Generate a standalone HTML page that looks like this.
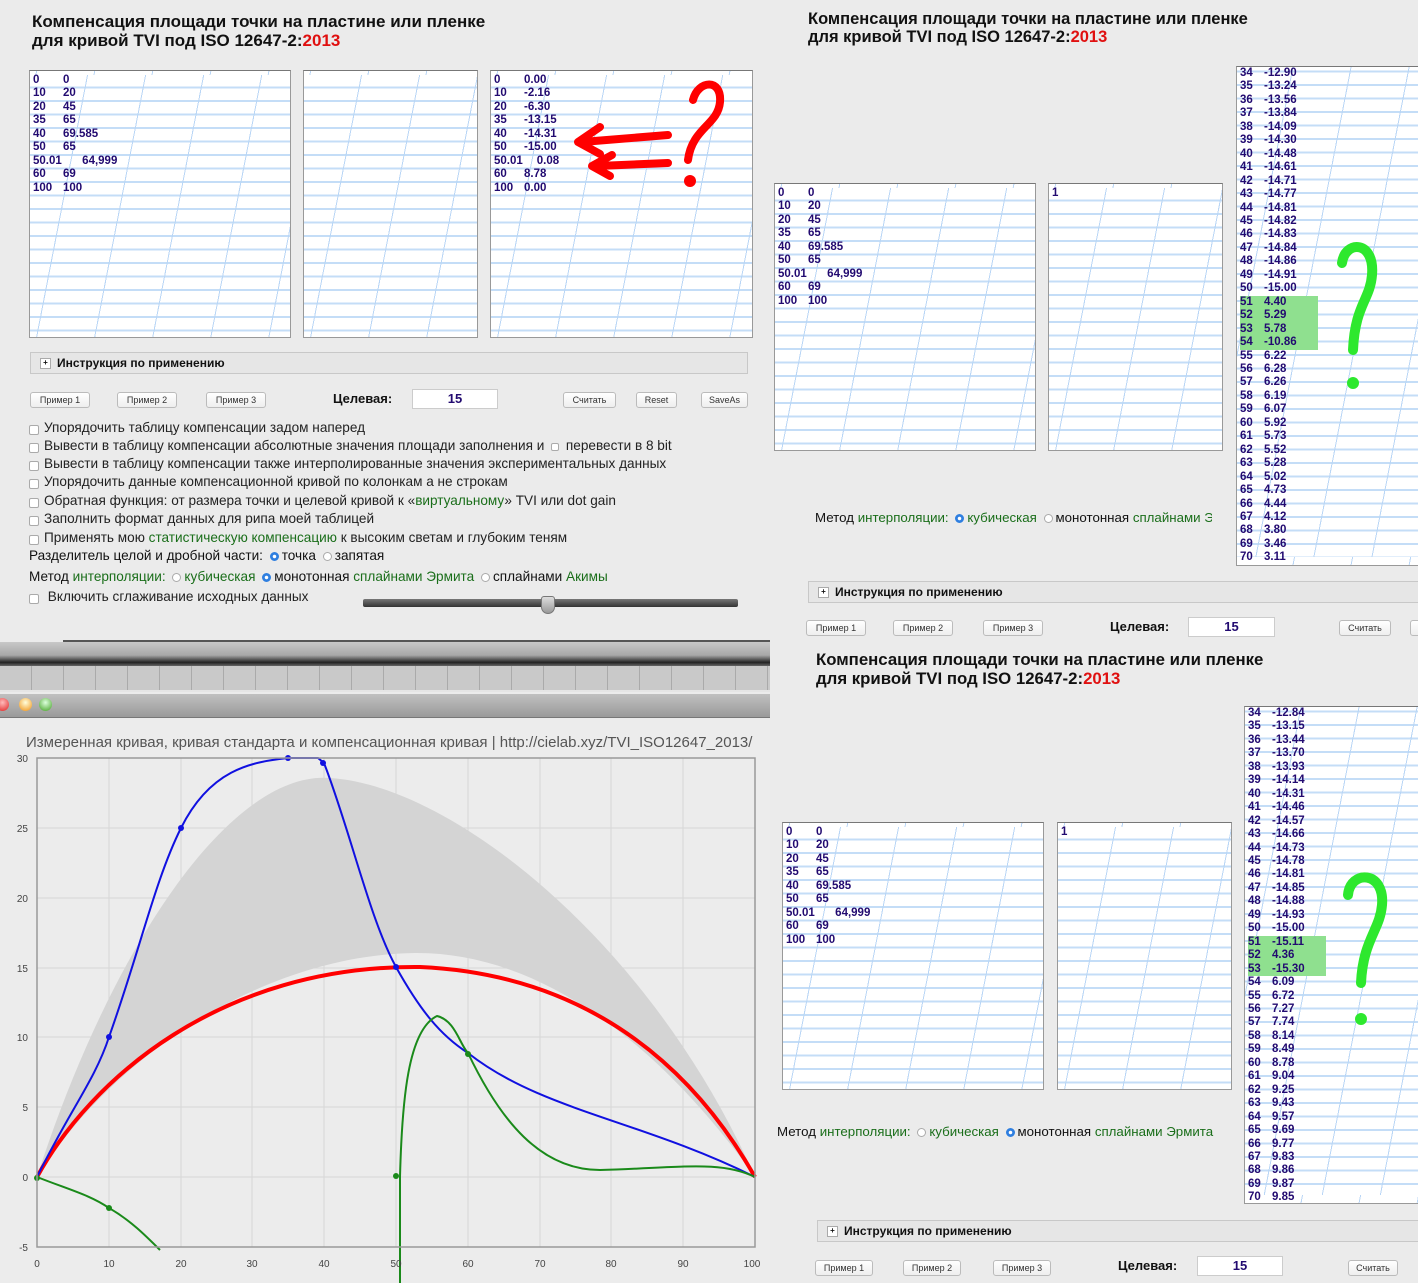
<!DOCTYPE html>
<html><head><meta charset="utf-8"><style>
*{margin:0;padding:0;box-sizing:border-box}
body{width:1418px;height:1283px;background:#ebebeb;position:relative;overflow:hidden;font-family:"Liberation Sans","DejaVu Sans",sans-serif;font-size:12px;color:#111}
.a{position:absolute}
.t{font-weight:bold;font-size:17px;line-height:19px;color:#111;white-space:nowrap}
.t span{color:#e01010}
.ta{position:absolute;background-color:#fff;border:1px solid #999;border-top-color:#777;overflow:hidden;
background-image:repeating-linear-gradient(101deg,transparent 0 56px,#b9d6f6 56px 57px),repeating-linear-gradient(180deg,transparent 0 11.5px,#c4ddf7 11.5px 13.5px);
background-position:0 4px,0 4px;font-weight:bold;font-size:11.5px;line-height:13.45px;color:#220a70;padding:3px 0 0 3px}
.ta i{font-style:normal;display:inline-block;width:30px}
.col i{width:24px}
.hl{background:#8fe08f;width:78px}
.bar{position:absolute;height:22px;border:1px solid #c8c8c8;background:#e6e6e6;font-weight:bold;font-size:12px;padding:3px 0 0 26px}
.bar:before{content:"+";position:absolute;left:9px;top:5px;width:9px;height:9px;border:1px solid #aaa;font-size:8px;line-height:7px;text-align:center;background:#fff}
.btn{position:absolute;height:16px;border:1px solid #bbb;border-radius:3px;background:linear-gradient(#fff,#eee);font-size:9px;text-align:center;line-height:14px;color:#333}
.lbl{position:absolute;font-weight:bold;font-size:13px}
.inp{position:absolute;height:20px;background:#fff;border:1px solid #ccc;text-align:center;font-weight:bold;color:#220a70;font-size:13px;line-height:18px}
.cb{position:absolute;left:29px;font-size:13.6px;line-height:15px;color:#222;white-space:nowrap}
.cb:before{content:"";display:inline-block;width:8px;height:8px;border:1px solid #aaa;border-radius:2px;background:#fff;margin-right:5px;vertical-align:-3px}
.g{color:#1a6e1a}
.r{display:inline-block;width:9px;height:9px;border-radius:50%;border:1px solid #aaa;background:#fff;vertical-align:-1px;margin:0 3px}
.r.on{background:radial-gradient(#fff 0 1.5px,#2f7fe0 2px);border-color:#2f7fe0}
</style></head><body>

<!-- TOP LEFT -->
<div class="a t" style="left:32px;top:12px">Компенсация площади точки на пластине или пленке<br>для кривой TVI под ISO 12647-2:<span>2013</span></div>
<div class="ta" style="left:29px;top:70px;width:262px;height:268px"><i>0</i>0<br><i>10</i>20<br><i>20</i>45<br><i>35</i>65<br><i>40</i>69.585<br><i>50</i>65<br><i>50.01</i>&nbsp;&nbsp;&nbsp;&nbsp;&nbsp;&nbsp;64,999<br><i>60</i>69<br><i>100</i>100</div>
<div class="ta" style="left:303px;top:70px;width:175px;height:268px"></div>
<div class="ta" style="left:490px;top:70px;width:263px;height:268px"><i>0</i>0.00<br><i>10</i>-2.16<br><i>20</i>-6.30<br><i>35</i>-13.15<br><i>40</i>-14.31<br><i>50</i>-15.00<br><i>50.01</i>&nbsp;&nbsp;&nbsp;&nbsp;0.08<br><i>60</i>8.78<br><i>100</i>0.00</div>
<svg class="a" style="left:560px;top:70px" width="200" height="130" viewBox="560 70 200 130"><g stroke="#f00" stroke-width="8" fill="none" stroke-linecap="round" stroke-linejoin="round"><path d="M668 135 L582 142"/><path d="M600 127 L578 142 L600 154"/><path d="M668 163 L598 166"/><path d="M612 155 L592 166 L610 176"/><path d="M693 100 C698 80 722 78 720 102 C718 125 692 128 688 160"/></g><circle cx="690" cy="181" r="6" fill="#f00"/></svg>

<div class="bar" style="left:30px;top:352px;width:718px">Инструкция по применению</div>
<div class="btn" style="left:30px;top:392px;width:60px">Пример 1</div>
<div class="btn" style="left:117px;top:392px;width:60px">Пример 2</div>
<div class="btn" style="left:206px;top:392px;width:60px">Пример 3</div>
<div class="lbl" style="left:333px;top:391px">Целевая:</div>
<div class="inp" style="left:412px;top:389px;width:86px">15</div>
<div class="btn" style="left:563px;top:392px;width:53px">Считать</div>
<div class="btn" style="left:636px;top:392px;width:41px">Reset</div>
<div class="btn" style="left:701px;top:392px;width:47px">SaveAs</div>

<div class="cb" style="top:420px">Упорядочить таблицу компенсации задом наперед</div>
<div class="cb" style="top:438px">Вывести в таблицу компенсации абсолютные значения площади заполнения и <span class="r" style="border-radius:2px;width:8px;height:8px"></span> перевести в 8 bit</div>
<div class="cb" style="top:456px">Вывести в таблицу компенсации также интерполированные значения экспериментальных данных</div>
<div class="cb" style="top:474px">Упорядочить данные компенсационной кривой по колонкам а не строкам</div>
<div class="cb" style="top:493px">Обратная функция: от размера точки и целевой кривой к «<span class="g">виртуальному</span>» TVI или dot gain</div>
<div class="cb" style="top:511px">Заполнить формат данных для рипа моей таблицей</div>
<div class="cb" style="top:530px">Применять мою <span class="g">статистическую компенсацию</span> к высоким светам и глубоким теням</div>
<div class="a" style="left:29px;top:548px;font-size:13.6px;white-space:nowrap">Разделитель целой и дробной части: <span class="r on"></span>точка <span class="r"></span>запятая</div>
<div class="a" style="left:29px;top:569px;font-size:13.6px;white-space:nowrap">Метод <span class="g">интерполяции:</span> <span class="r"></span><span class="g">кубическая</span> <span class="r on"></span>монотонная <span class="g">сплайнами Эрмита</span> <span class="r"></span>сплайнами <span class="g">Акимы</span></div>
<div class="cb" style="top:589px">&nbsp;Включить сглаживание исходных данных</div>
<div class="a" style="left:363px;top:599px;width:375px;height:8px;background:linear-gradient(#777,#333);border-radius:2px"></div>
<div class="a" style="left:541px;top:596px;width:14px;height:18px;background:linear-gradient(#ddd,#999);border-radius:3px 3px 7px 7px;border:1px solid #777"></div>

<!-- mac chrome -->
<div class="a" style="left:63px;top:640px;width:707px;height:2px;background:#555"></div>
<div class="a" style="left:0;top:642px;width:770px;height:24px;background:linear-gradient(#c8c8c8,#a8a8a8 55%,#222 85%,#666)"></div>
<div class="a" style="left:0;top:666px;width:770px;height:26px;background:repeating-linear-gradient(90deg,#c9c9c9 0 31px,#aaa 31px 32px);border-bottom:2px solid #e5e5e5"></div>
<div class="a" style="left:0;top:694px;width:770px;height:24px;background:linear-gradient(#c0c0c0,#9a9a9a);border-bottom:1px solid #777"></div>
<div class="a" style="left:-4px;top:698px;width:13px;height:13px;border-radius:50%;background:radial-gradient(circle at 50% 35%,#fbb,#e02020)"></div>
<div class="a" style="left:19px;top:698px;width:13px;height:13px;border-radius:50%;background:radial-gradient(circle at 50% 35%,#ffd,#f09010)"></div>
<div class="a" style="left:39px;top:698px;width:13px;height:13px;border-radius:50%;background:radial-gradient(circle at 50% 35%,#dfd,#40a020)"></div>
<div class="a" style="left:0;top:719px;width:770px;height:564px;background:#ececec"></div>
<div class="a" style="left:26px;top:734px;font-size:15px;color:#555;white-space:nowrap">Измеренная кривая, кривая стандарта и компенсационная кривая | http://cielab.xyz/TVI_ISO12647_2013/</div>

<svg class="a" style="left:0;top:720px" width="770" height="563" viewBox="0 720 770 563">
<g stroke="#d6d6d6" stroke-width="1">
<path d="M109 758V1247M181 758V1247M252 758V1247M324 758V1247M396 758V1247M468 758V1247M540 758V1247M611 758V1247M683 758V1247"/>
<path d="M37 828H755M37 898H755M37 968H755M37 1037H755M37 1107H755M37 1177H755"/>
</g>
<path d="M37 1177 C110 950 230 770 330 778 C450 785 650 940 755 1177 C650 1030 530 952 415 953 C260 955 110 1060 37 1177Z" fill="#d4d4d4"/>
<path d="M37 1177 C90 1080 220 965 420 967 C600 975 700 1080 755 1177" fill="none" stroke="#f00" stroke-width="4"/>
<path d="M37 1177 C70 1110 95 1080 109 1037 C140 950 155 880 181 828 C210 770 250 762 288 758 L318 758 L324 763 C350 830 370 920 396 967 C420 1010 440 1035 468 1053 C540 1110 640 1120 755 1177" fill="none" stroke="#1010e0" stroke-width="2"/>
<path d="M37 1177 C70 1190 90 1195 109 1208 C130 1220 145 1235 160 1250" fill="none" stroke="#1a8a1a" stroke-width="2"/>
<path d="M400 1283 L400 1177 C402 1100 408 1030 437 1016 C455 1020 460 1045 468 1053 C500 1120 540 1170 600 1170 C680 1168 720 1160 755 1177" fill="none" stroke="#1a8a1a" stroke-width="2"/>
<g fill="#1010e0"><circle cx="109" cy="1037" r="3"/><circle cx="181" cy="828" r="3"/><circle cx="288" cy="758" r="3"/><circle cx="323" cy="763" r="3"/><circle cx="396" cy="967" r="3"/></g>
<g fill="#1a8a1a"><circle cx="109" cy="1208" r="3"/><circle cx="396" cy="1176" r="3"/><circle cx="468" cy="1054" r="3"/><circle cx="37" cy="1178" r="3"/></g>
<rect x="37" y="758" width="718" height="489" fill="none" stroke="#999" stroke-width="1.5"/>
<g font-size="10" fill="#444" font-family="Liberation Sans" text-anchor="end"><text x="28" y="762">30</text><text x="28" y="832">25</text><text x="28" y="902">20</text><text x="28" y="972">15</text><text x="28" y="1041">10</text><text x="28" y="1111">5</text><text x="28" y="1181">0</text><text x="28" y="1251">-5</text></g>
<g font-size="10" fill="#444" font-family="Liberation Sans" text-anchor="middle"><text x="37" y="1267">0</text><text x="109" y="1267">10</text><text x="181" y="1267">20</text><text x="252" y="1267">30</text><text x="324" y="1267">40</text><text x="396" y="1267">50</text><text x="468" y="1267">60</text><text x="540" y="1267">70</text><text x="611" y="1267">80</text><text x="683" y="1267">90</text><text x="752" y="1267">100</text></g>
</svg>

<!-- RIGHT TOP -->
<div class="a t" style="left:808px;top:10px;font-size:16.5px;line-height:18px">Компенсация площади точки на пластине или пленке<br>для кривой TVI под ISO 12647-2:<span>2013</span></div>
<div class="ta" style="left:774px;top:183px;width:262px;height:268px"><i>0</i>0<br><i>10</i>20<br><i>20</i>45<br><i>35</i>65<br><i>40</i>69.585<br><i>50</i>65<br><i>50.01</i>&nbsp;&nbsp;&nbsp;&nbsp;&nbsp;&nbsp;64,999<br><i>60</i>69<br><i>100</i>100</div>
<div class="ta" style="left:1048px;top:183px;width:175px;height:268px">1</div>
<div class="ta col" style="left:1236px;top:66px;width:190px;height:500px;padding-top:0;background-position:0 -8px,0 -8px">
<i>34</i>-12.90<br><i>35</i>-13.24<br><i>36</i>-13.56<br><i>37</i>-13.84<br><i>38</i>-14.09<br><i>39</i>-14.30<br><i>40</i>-14.48<br><i>41</i>-14.61<br><i>42</i>-14.71<br><i>43</i>-14.77<br><i>44</i>-14.81<br><i>45</i>-14.82<br><i>46</i>-14.83<br><i>47</i>-14.84<br><i>48</i>-14.86<br><i>49</i>-14.91<br><i>50</i>-15.00<br><div class="hl"><i>51</i>4.40<br><i>52</i>5.29<br><i>53</i>5.78<br><i>54</i>-10.86</div><i>55</i>6.22<br><i>56</i>6.28<br><i>57</i>6.26<br><i>58</i>6.19<br><i>59</i>6.07<br><i>60</i>5.92<br><i>61</i>5.73<br><i>62</i>5.52<br><i>63</i>5.28<br><i>64</i>5.02<br><i>65</i>4.73<br><i>66</i>4.44<br><i>67</i>4.12<br><i>68</i>3.80<br><i>69</i>3.46<br><i>70</i>3.11</div>
<svg class="a" style="left:1330px;top:235px" width="60" height="160"><path d="M12 28 C15 5 45 5 42 40 C40 65 25 70 23 115" stroke="#2ee82e" stroke-width="10" fill="none" stroke-linecap="round"/><circle cx="23" cy="148" r="6" fill="#2ee82e"/></svg>
<div class="a" style="left:815px;top:510px;font-size:13.3px;white-space:nowrap;width:397px;overflow:hidden">Метод <span class="g">интерполяции:</span> <span class="r on"></span><span class="g">кубическая</span> <span class="r"></span>монотонная <span class="g">сплайнами Эрмита</span></div>
<div class="bar" style="left:808px;top:581px;width:620px">Инструкция по применению</div>
<div class="btn" style="left:806px;top:620px;width:60px">Пример 1</div>
<div class="btn" style="left:893px;top:620px;width:60px">Пример 2</div>
<div class="btn" style="left:983px;top:620px;width:60px">Пример 3</div>
<div class="lbl" style="left:1110px;top:619px">Целевая:</div>
<div class="inp" style="left:1188px;top:617px;width:87px">15</div>
<div class="btn" style="left:1339px;top:620px;width:52px">Считать</div>
<div class="btn" style="left:1410px;top:620px;width:20px"></div>

<!-- RIGHT BOTTOM -->
<div class="a t" style="left:816px;top:650px;font-size:16.8px">Компенсация площади точки на пластине или пленке<br>для кривой TVI под ISO 12647-2:<span>2013</span></div>
<div class="ta" style="left:782px;top:822px;width:262px;height:268px"><i>0</i>0<br><i>10</i>20<br><i>20</i>45<br><i>35</i>65<br><i>40</i>69.585<br><i>50</i>65<br><i>50.01</i>&nbsp;&nbsp;&nbsp;&nbsp;&nbsp;&nbsp;64,999<br><i>60</i>69<br><i>100</i>100</div>
<div class="ta" style="left:1057px;top:822px;width:175px;height:268px">1</div>
<div class="ta col" style="left:1244px;top:706px;width:190px;height:498px;padding-top:0;background-position:0 -8px,0 -8px">
<i>34</i>-12.84<br><i>35</i>-13.15<br><i>36</i>-13.44<br><i>37</i>-13.70<br><i>38</i>-13.93<br><i>39</i>-14.14<br><i>40</i>-14.31<br><i>41</i>-14.46<br><i>42</i>-14.57<br><i>43</i>-14.66<br><i>44</i>-14.73<br><i>45</i>-14.78<br><i>46</i>-14.81<br><i>47</i>-14.85<br><i>48</i>-14.88<br><i>49</i>-14.93<br><i>50</i>-15.00<br><div class="hl"><i>51</i>-15.11<br><i>52</i>4.36<br><i>53</i>-15.30</div><i>54</i>6.09<br><i>55</i>6.72<br><i>56</i>7.27<br><i>57</i>7.74<br><i>58</i>8.14<br><i>59</i>8.49<br><i>60</i>8.78<br><i>61</i>9.04<br><i>62</i>9.25<br><i>63</i>9.43<br><i>64</i>9.57<br><i>65</i>9.69<br><i>66</i>9.77<br><i>67</i>9.83<br><i>68</i>9.86<br><i>69</i>9.87<br><i>70</i>9.85</div>
<svg class="a" style="left:1335px;top:865px" width="65" height="165"><path d="M13 30 C15 5 50 5 47 40 C45 65 28 75 26 118" stroke="#2ee82e" stroke-width="10" fill="none" stroke-linecap="round"/><circle cx="26" cy="154" r="6" fill="#2ee82e"/></svg>
<div class="a" style="left:777px;top:1124px;font-size:13.3px;white-space:nowrap">Метод <span class="g">интерполяции:</span> <span class="r"></span><span class="g">кубическая</span> <span class="r on"></span>монотонная <span class="g">сплайнами Эрмита</span></div>
<div class="bar" style="left:817px;top:1220px;width:610px">Инструкция по применению</div>
<div class="btn" style="left:815px;top:1260px;width:58px">Пример 1</div>
<div class="btn" style="left:903px;top:1260px;width:58px">Пример 2</div>
<div class="btn" style="left:993px;top:1260px;width:58px">Пример 3</div>
<div class="lbl" style="left:1118px;top:1258px">Целевая:</div>
<div class="inp" style="left:1197px;top:1256px;width:86px">15</div>
<div class="btn" style="left:1348px;top:1260px;width:50px">Считать</div>
</body></html>
